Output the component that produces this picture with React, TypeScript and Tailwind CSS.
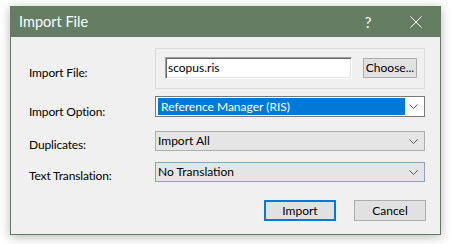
import React from "react";

const font = { fontFamily: 'Lato, "Noto Sans", sans-serif' };

function Chevron() {
  return (
    <svg width="9" height="5" viewBox="0 0 9 5" className="shrink-0">
      <path d="M0.5 0.5 L4.5 4.5 L8.5 0.5" fill="none" stroke="#5a5a5a" strokeWidth="1" />
    </svg>
  );
}

function Label({ text, pt }: { text: string; pt: string }) {
  return (
    <div className={`w-[144px] shrink-0 pl-[18px] text-[12px] leading-[16px] tracking-[-0.15px] text-black ${pt}`}>{text}</div>
  );
}

export default function App() {
  return (
    <div className="w-[454px] h-[244px] bg-white pt-[6px] pl-[10px]" style={font}>
      <div className="w-[431px] h-[229px] border border-[#637b61] shadow-[0_2px_10px_rgba(0,0,0,0.28)] flex flex-col bg-[#f0f0f0]">
        {/* Title bar */}
        <div className="h-[30px] bg-[#657d63] flex items-center shrink-0">
          <div className="pl-[8px] text-[14.5px] leading-[18px] text-white flex-1">Import File</div>
          <div className="w-[20px] text-center text-[15px] leading-[18px] text-white mr-[32px]">?</div>
          <svg width="12" height="12" viewBox="0 0 12 12" className="mr-[18px]">
            <path d="M0.5 0.5 L11.5 11.5 M11.5 0.5 L0.5 11.5" stroke="#ffffff" strokeWidth="1" fill="none" />
          </svg>
        </div>
        {/* Client */}
        <div className="flex flex-col pt-[11px] pr-[15px]">
          {/* Row 1 */}
          <div className="flex">
            <Label text="Import File:" pt="pt-[17px]" />
            <div className="w-[270px] h-[41px] border border-[#dadada] flex items-start pl-[9px] pt-[8px]">
              <div className="w-[187px] h-[22px] bg-white border border-t-[#a0a0a0] border-l-[#a0a0a0] border-b-white border-r-white shadow-[inset_1px_1px_0_#696969,inset_-1px_-1px_0_#e3e3e3] text-[12px] leading-[18px] pl-[2px] pt-[1px] text-black">
                scopus.ris
              </div>
              <div className="ml-[11px] mt-[1px] w-[54px] h-[20px] bg-[#e1e1e1] border border-[#adadad] text-[12px] leading-[18px] text-center text-black">
                Choose...
              </div>
            </div>
          </div>
          {/* Row 2 */}
          <div className="flex mt-[7px]">
            <Label text="Import Option:" pt="pt-[8px]" />
            <div className="w-[270px] h-[21px] bg-white border border-[#7a7a7a] flex items-center pl-[2px] pr-[6px]">
              <div className="w-[247px] h-[17px] bg-[#0078d7] text-white text-[12px] leading-[17px] pl-[3px]">
                Reference Manager (RIS)
              </div>
              <div className="flex-1" />
              <Chevron />
            </div>
          </div>
          {/* Row 3 */}
          <div className="flex mt-[11px]">
            <Label text="Duplicates:" pt="pt-[6px]" />
            <div className="w-[270px] h-[20px] bg-[#e5e5e5] border border-[#adadad] flex items-center pl-[2px] pr-[6px]">
              <div className="flex-1 text-[12px] leading-[18px] text-black">Import All</div>
              <Chevron />
            </div>
          </div>
          {/* Row 4 */}
          <div className="flex mt-[9px]">
            <Label text="Text Translation:" pt="pt-[6px]" />
            <div className="w-[270px] h-[20px] bg-[#e5e5e5] border border-[#8fa3b8] flex items-center pl-[2px] pr-[6px]">
              <div className="flex-1 text-[12px] leading-[18px] text-black">No Translation</div>
              <Chevron />
            </div>
          </div>
          {/* Buttons */}
          <div className="flex justify-end mt-[16px] gap-[18px]">
            <div className="w-[72px] h-[21px] bg-[#e1e1e1] border-2 border-[#0078d7] text-[12px] leading-[17px] text-center text-black">
              Import
            </div>
            <div className="w-[72px] h-[21px] bg-[#e1e1e1] border border-[#adadad] text-[12px] leading-[19px] text-center text-black mr-[-1px]">
              Cancel
            </div>
          </div>
        </div>
      </div>
    </div>
  );
}
